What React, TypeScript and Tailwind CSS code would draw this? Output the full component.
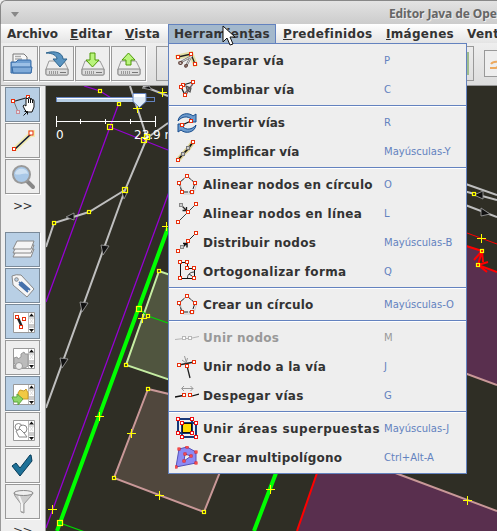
import type { ReactNode } from "react";

const FONT = "font-['DejaVu_Sans',sans-serif]";

type Pt = [number, number];

function Node({ at, c = "#e8300c", f = "#fff", s = 3, w = 1 }: { at: Pt; c?: string; f?: string; s?: number; w?: number }) {
  return <rect x={Math.floor(at[0]) - s / 2} y={Math.floor(at[1]) - s / 2} width={s} height={s} fill={f} stroke={c} strokeWidth={w} />;
}

function Nodes({ pts, c, s }: { pts: Pt[]; c?: string; s?: number }) {
  return <>{pts.map((p, i) => <Node key={i} at={p} c={c} s={s} />)}</>;
}

function MenuSvg({ children }: { children: ReactNode }) {
  return <svg width="24" height="24" viewBox="0 0 24 24" fill="none" className="mt-px shrink-0">{children}</svg>;
}

function Pentagon() {
  return (
    <MenuSvg>
      <path d="M13.500 4.500l8 7-3 9.500h-10l-3-9" stroke="#ccc" />
      <path d="M12 3l8 7-3 9H7l-3-9z" stroke="#222" strokeDasharray="5 1" />
      <Nodes pts={[[12, 3], [20, 10], [17, 19], [7, 19], [4, 10]]} />
    </MenuSvg>
  );
}

const icons: Record<string, ReactNode> = {
  split: (
    <MenuSvg>
      <path d="M3 8l13-3M16 5l4 10" stroke="#e3dfa2" strokeWidth="5" strokeLinecap="square" />
      <path d="M3 8l13-3 4 10" stroke="#222" strokeWidth="1.3" />
      <path d="M6 13l11-6M17 6l-6 11" stroke="#777" strokeWidth="2.2" />
      <path d="M6 13l11-6M17 6l-6 11" stroke="#eee" strokeWidth=".8" />
      <path d="M4 13c2-1 4 0 3 1.500s-4 1-3-1.500zM10 16c2-1 3 0 2 1.500s-3 0-2-1.500z" stroke="#5e3e36" strokeWidth="1.3" />
      <Nodes pts={[[3, 8], [16, 5], [20, 15]]} />
    </MenuSvg>
  ),
  combine: (
    <MenuSvg>
      <path d="M8 7l10-3M6 9l4 8" stroke="#222" strokeWidth="1.3" />
      <path d="M11 17l7-12M10 15l8-9" stroke="#765c62" strokeWidth="1.2" />
      <path d="M11 8l1 4 3 2 1-4zM12 10h4" stroke="#555" strokeWidth="1.2" />
      <Nodes pts={[[8, 7], [6, 9], [18, 4], [10, 17]]} />
    </MenuSvg>
  ),
  reverse: (
    <MenuSvg>
      <path d="M3 10C4 2 14 1 18 5l3-2v8h-8l3-3c-3-3-9-3-13 2z" fill="#6d9bcd" stroke="#174c8d" />
      <path d="M21 14c-1 8-11 9-15 5l-3 2v-8h8l-3 3c3 3 9 3 13-2z" fill="#6d9bcd" stroke="#174c8d" />
      <path d="M7 14l9-4" stroke="#eee" strokeWidth="3" />
      <path d="M7 14l9-4" stroke="#111" strokeWidth="1.3" />
      <Nodes pts={[[7, 14], [16, 10]]} />
    </MenuSvg>
  ),
  simplify: (
    <MenuSvg>
      <path d="M3 20l5-6 5-5 5-7" stroke="#ddd091" strokeWidth="4.500" />
      <path d="M3 20l5-6 5-5 5-7" stroke="#111" strokeWidth="1.700" />
      <Node at={[8, 14]} c="#777" f="#ccc" /><Node at={[13, 8]} c="#777" f="#ccc" />
      <Nodes pts={[[3, 20], [18, 2]]} />
    </MenuSvg>
  ),
  circle: <Pentagon />,
  create: <Pentagon />,
  line: (
    <MenuSvg>
      <path d="M3 20L21 2" stroke="#444" /><path d="M6 3l5 5M7.500 8.500h4V5" stroke="#222" strokeWidth="1.3" />
      <Node at={[6, 3]} c="#888" f="#ccc" /><Nodes pts={[[3, 20], [13, 10], [21, 2]]} />
    </MenuSvg>
  ),
  distribute: (
    <MenuSvg>
      <path d="M3 20L21 2" stroke="#222" /><path d="M8 16l4-4M8 12.500h4v4" stroke="#111" strokeWidth="1.4" />
      <Node at={[7, 16]} c="#888" f="#ccc" /><Nodes pts={[[3, 20], [13, 10], [21, 2]]} />
    </MenuSvg>
  ),
  ortho: (
    <MenuSvg>
      <path d="M5.500 2.500h7v6h7v10h-14z" stroke="#111" /><path d="M12.500 18c0-4 3-6 7-6M14 14l3 2" stroke="#333" />
      <Nodes pts={[[5, 2], [12, 2], [12, 8], [19, 8], [19, 18], [5, 18]]} />
    </MenuSvg>
  ),
  merge: (
    <MenuSvg>
      <path d="M0 13.500l9-1h6l9-2" stroke="#b5b5b5" strokeWidth="1.2" /><Nodes c="#b8b8b8" pts={[[9, 12], [15, 12]]} />
    </MenuSvg>
  ),
  join: (
    <MenuSvg>
      <path d="M4 10l15-3M12 11l3 12" stroke="#222" strokeWidth="1.3" />
      <path d="M9.500 1l2 7M7 5l4 3 1.500-5" stroke="#999" />
      <Nodes pts={[[4, 10], [12, 11], [19, 7]]} />
    </MenuSvg>
  ),
  unglue: (
    <MenuSvg>
      <path d="M7 4.500h11M9 2L6.500 4.500 9 7M15.500 2L18 4.500 15.500 7" stroke="#999" />
      <path d="M0 13l8-1.500M17 12l7-2" stroke="#111" strokeWidth="1.3" />
      <Nodes pts={[[9, 11], [15, 11]]} />
    </MenuSvg>
  ),
  areas: (
    <MenuSvg>
      <path d="M7 6h10v10H7z" fill="#ffd900" />
      <path d="M3 2h14v14H3zM7 6h14v14H7z" stroke="#173878" strokeWidth="2" />
      <path d="M7.500 6.500h9v9h-9z" stroke="#111" />
      <Nodes c="#ed1010" pts={[[3, 2], [17, 2], [3, 16], [7, 6], [21, 6], [17, 16], [7, 20], [21, 20]]} />
    </MenuSvg>
  ),
  multi: (
    <MenuSvg>
      <path d="M4 3l8-2 9 5v11L1 21z" fill="#8b8bf5" stroke="#5454bb" />
      <path d="M10 8l6 2-7 5z" fill="#eee" stroke="#5454bb" />
      <Nodes c="#ed1010" s={2} pts={[[4, 3], [12, 1], [21, 6], [21, 17], [1, 21], [10, 8], [16, 10], [9, 15]]} />
    </MenuSvg>
  ),
};

type Item = { icon: string; label: string; keys: string; track: string; off?: boolean };
const groups: Item[][] = [
  [
    { icon: "split", label: "Separar vía", keys: "P", track: "tracking-[0.32px]" },
    { icon: "combine", label: "Combinar vía", keys: "C", track: "tracking-[0.2px]" },
  ],
  [
    { icon: "reverse", label: "Invertir vías", keys: "R", track: "tracking-normal" },
    { icon: "simplify", label: "Simplificar vía", keys: "Mayúsculas-Y", track: "tracking-normal" },
  ],
  [
    { icon: "circle", label: "Alinear nodos en círculo", keys: "O", track: "tracking-[0.27px]" },
    { icon: "line", label: "Alinear nodos en línea", keys: "L", track: "tracking-[0.37px]" },
    { icon: "distribute", label: "Distribuir nodos", keys: "Mayúsculas-B", track: "tracking-[0.25px]" },
    { icon: "ortho", label: "Ortogonalizar forma", keys: "Q", track: "tracking-[0.34px]" },
  ],
  [{ icon: "create", label: "Crear un círculo", keys: "Mayúsculas-O", track: "tracking-[0.19px]" }],
  [
    { icon: "merge", label: "Unir nodos", keys: "M", off: true, track: "tracking-[0.3px]" },
    { icon: "join", label: "Unir nodo a la vía", keys: "J", track: "tracking-[0.22px]" },
    { icon: "unglue", label: "Despegar vías", keys: "G", track: "tracking-[0.38px]" },
  ],
  [
    { icon: "areas", label: "Unir áreas superpuestas", keys: "Mayúsculas-J", track: "tracking-[0.49px]" },
    { icon: "multi", label: "Crear multipolígono", keys: "Ctrl+Alt-A", track: "tracking-[0.24px]" },
  ],
];

function Menu() {
  return (
    <div className="absolute left-[168px] top-[43px] h-[431px] w-[299px] border border-[#6382bf] bg-[#eee] pt-[2px]">
      {groups.map((g, gi) => (
        <div key={gi}>
          {gi > 0 && <div className="h-1 pt-px"><div className="h-[2px] border-b border-white bg-[#6382bf]" /></div>}
          {g.map((it) => (
            <div key={it.label} className="flex h-[29px] items-center pl-[6px]">
              {icons[it.icon]}
              <span className={`ml-1 w-[181px] shrink-0 whitespace-nowrap text-[12px] font-bold leading-4 ${it.track} ${it.off ? "text-[#999]" : "text-[#333]"}`}>{it.label}</span>
              <span className={`whitespace-nowrap text-[10px] leading-3 ${it.off ? "text-[#999]" : "text-[#6382bf]"}`}>{it.keys}</span>
            </div>
          ))}
        </div>
      ))}
    </div>
  );
}

function Plus({ at }: { at: Pt }) {
  return <path d={`M${at[0] - 4} ${at[1] + 0.5}h9M${at[0] + 0.5} ${at[1] - 4}v9`} stroke="#ff0" shapeRendering="crispEdges" />;
}

function MapView() {
  const small: Pt[] = [[99, 90], [118, 103], [88, 211], [53, 222], [158, 270], [147, 315], [125, 364], [147, 388], [113, 477], [203, 511], [473, 193]];
  const large: Pt[] = [[109, 126], [143, 139], [146, 136], [124, 189], [138, 308], [59, 522]];
  const pluses: Pt[] = [[162, 92], [137, 108], [142, 318], [99, 416], [52, 509], [131, 433], [159, 495], [270, 489], [467, 500], [481, 238], [166, 226]];
  return (
    <svg width="451" height="445" viewBox="46 86 451 445" fill="none" className="block shrink-0 bg-[#2f2e25]">
      <path d="M159 271l-33 94 200 68V330z" fill="#50553f" stroke="#c5eda2" strokeWidth="2" />
      <path d="M148 389l-34 89 90 34 40-100z" fill="#50473d" stroke="#c99898" strokeWidth="2" />
      <path d="M317 473h78l102 38v20H297z" fill="#592f4e" />
      <path d="M440 237l42 14-4 14 19 7v113l-57-20z" fill="#592f4e" />
      <path d="M440 364l57 21M390 471l107 40" stroke="#c99898" strokeWidth="2" />
      <path d="M84 86l16 5 19 12-9 24-64 175M110 127l58 23M180 162L46 528" stroke="#9500d2" strokeWidth="1.3" />
      <g stroke="#bfbfbf" strokeWidth="2">
        <path d="M130 86l17 52-22 52-79 218M125 190l-36 22-35 11-8 24M147 138l21-15M143 86l25 10" />
        <path d="M460 182l37 13M460 190l37 10M460 203l37 14" />
      </g>
      <path d="M168 228L57 531M276 473l-22 58" stroke="#0f0" strokeWidth="4" />
      <path d="M139 309l9 7 20 7M60 523l25 9" stroke="#00d700" strokeWidth="1.2" />
      <path d="M317 473l-20 58" stroke="#f00" strokeWidth="2" />
      <path d="M467 233l30 11" stroke="#f00" />
      <path d="M460 244l22 7-4 14 19 7M474 260l8-9 1 11M488 262l-10 3 9 7" stroke="#f00" strokeWidth="2" />
      <g fill="#111" stroke="#999" strokeWidth=".9">
        <path d="M101 245l8 1-6 9zM80 302l8 1-6 9zM60 358l8 1-6 9zM66 217l8-4v7zM122 192l5 1-3 6zM142 88l7-2 3 4zM474 195l9-4v8zM481 208l9 6-9 2z" />
      </g>
      {small.map((p, i) => <Node key={i} at={[p[0] + 1, p[1] + 1]} c="#ff0" f="#2f2e25" s={3} w={1.2} />)}
      {large.map((p, i) => <Node key={i} at={[p[0] + 1, p[1] + 1]} c="#ff0" f="none" s={5} w={1.2} />)}
      {pluses.map((p, i) => <Plus key={i} at={p} />)}
      <Node at={[482, 251]} c="#ff0" f="#f00" w={1.2} /><Node at={[478, 265]} c="#ff0" f="#f00" w={1.2} />
      <path d="M56 121.500h100M56.500 116v11M80.500 119v5M105.500 119v5M130.500 119v5M155.500 116v11" stroke="#fff" shapeRendering="crispEdges" />
      <text x="56" y="139" fill="#fff" className={`${FONT} text-[12px]`}>0</text>
      <text x="134" y="139" fill="#fff" className={`${FONT} text-[12px]`}>23.9 m</text>
      <rect x="56.500" y="97.500" width="98" height="4" stroke="#6382bf" />
      <path d="M57 99h76v3H57z" fill="#b8cfe5" /><path d="M57 98.500h76" stroke="#fff" />
      <path d="M133 93.500h13v8l-6.500 6-6.500-6z" fill="#dfeaf5" stroke="#6382bf" /><path d="M134 94h11v3h-11z" fill="#fff" />
    </svg>
  );
}

function Button({ on, children }: { on?: boolean; children?: ReactNode }) {
  return (
    <div className={`flex h-[35px] w-[35px] shrink-0 items-center justify-center border shadow-[1px_1px_0_#fff] ${on ? "border-[#7a8a99] bg-[#b8cfe5]" : "border-[#999] bg-[#eee]"}`}>
      <svg width="24" height="24" viewBox="0 0 24 24" fill="none" className="overflow-visible">{children}</svg>
    </div>
  );
}

const disk = (
  <>
    <path d="M4 9h15l4 8v5q0 1-1 1H2q-1 0-1-1v-5z" fill="#eee" stroke="#999" />
    <path d="M1 17h22v5q0 1-1 1H2q-1 0-1-1z" fill="#ddd" stroke="#888" />
    <path d="M4.500 19v3m2-3v3m2-3v3m2-3v3m2-3v3" stroke="#999" /><path d="M15 20.500h6" stroke="#777" />
  </>
);
const list = (c: ReactNode) => (
  <>
    <path d="M2.500 2.500h21v20h-21z" fill="#fff" stroke="#999" /><path d="M17.500 3v19M18 8h5" stroke="#bbb" />
    <path d="M19 9l3 4m0-4l-3 4" stroke="#ddd" />
    <path d="M18 14h5v4h-5z" fill="#ccc" /><path d="M18 6.500L20.500 3.500 23 6.500zM18 19L20.500 22 23 19z" fill="#111" />{c}
  </>
);

export default function App() {
  return (
    <div className={`relative h-[531px] w-[497px] overflow-hidden bg-[#eee] text-[#333] ${FONT}`}>
      <header className="flex h-6 items-center overflow-hidden rounded-tl-md border-l border-t border-[#888] bg-gradient-to-b from-[#e3e3e3] to-[#ccc]">
        <svg width="8" height="5" viewBox="0 0 8 5" className="ml-[10px] mt-[3px] shrink-0"><path d="M0 0h8L4 5z" fill="#888" /></svg>
        <span className="ml-[370px] mt-[3px] whitespace-nowrap font-['Noto_Sans',sans-serif] text-[12px] font-bold tracking-[-0.1px] text-[#666] [text-shadow:1px_1px_0_#eee]">Editor Java de OpenStreetMap</span>
      </header>
      <nav className="flex h-[19px] items-center whitespace-nowrap border-l border-[#999] bg-gradient-to-b from-white to-[#e4e4e4] text-[12px] font-bold">
        <span className="ml-[6px] w-[63px] shrink-0">Archivo</span>
        <span className="w-[55px] shrink-0 tracking-[0.23px]"><u>E</u>ditar</span>
        <span className="w-[43px] shrink-0 tracking-[0.2px]"><u>V</u>ista</span>
        <span className="flex h-[19px] w-[108px] shrink-0 items-center border-l border-r border-t border-[#6382bf] bg-[#a3b8cc] pl-[5px] tracking-[0.3px]">Herramien<u>t</u>as</span>
        <span className="ml-[7px] w-[103px] shrink-0 tracking-[0.33px]"><u>P</u>redefinidos</span>
        <span className="w-[81px] shrink-0 tracking-[0.3px]"><u>I</u>mágenes</span>
        <span className="tracking-[0.3px]">Ventanas</span>
      </nav>
      <div className="flex h-[43px] items-start gap-px overflow-hidden border-b border-l border-[#999] bg-gradient-to-b from-[#eee] to-[#ddd] pl-[2px] pt-[3px]">
        <Button>
          <path d="M4 16V2h11l3 3v10z" fill="#f8f8f8" stroke="#777" /><path d="M6 4.500h6M6 7h7" stroke="#aaa" strokeWidth="1.500" />
          <path d="M2 21V10h5l2-2h12q1 0 1 1v12z" fill="#6f9fd2" stroke="#3469a4" /><path d="M3 11h18v5H3z" fill="#9cc0e6" /><path d="M4 21l-1-6h20l-1 6z" fill="#80abd9" stroke="#3469a4" />
        </Button>
        <Button>{disk}<path d="M1 1C10-2 18 1 18 7h4l-7 8-7-8h4c0-3-4-6-11-6z" fill="#5a94c1" stroke="#2f658e" /></Button>
        <Button>{disk}<path d="M9 1h5v7h4l-6.500 7L5 8h4z" fill="#b9f47c" stroke="#4e9a06" /></Button>
        <Button>{disk}<path d="M9 13h5V8h4l-6.500-7L5 8h4z" fill="#b9f47c" stroke="#4e9a06" /></Button>
        <div className="ml-[9px] flex h-[35px] w-[318px] shrink-0 justify-end border border-[#999]"><div className="my-[5px] mr-1 w-1 bg-[#9dbb8d]" /></div>
        <div className="ml-[9px] mt-1 flex h-[27px] w-[30px] shrink-0 items-center border border-[#999] bg-[#eee]">
          <svg width="20" height="20" viewBox="0 0 20 20" fill="none" className="ml-1 shrink-0"><path d="M2 10q2-3 8-2M9 8q2 4-2 6H1" stroke="#eca95e" strokeWidth="2" /></svg>
        </div>
      </div>
      <div className="flex h-[445px]">
        <aside className="flex w-[46px] shrink-0 flex-col gap-px overflow-hidden border-l border-r border-[#999] pl-[4px] pt-px">
          <Button on>
            <path d="M2.500 8.500l14-4" stroke="#222" strokeWidth="1.3" /><path d="M3.500 10l4 10" stroke="#777" />
            <Nodes pts={[[2.5, 8.5], [17.5, 4.5]]} /><Node at={[7.5, 19.5]} c="#cb8c96" f="#dbe2ee" />
            <path d="M14 17l-2-4q1-2 3 0V6q1-2 2 0V5q1-1 2 0v1q1-1 2 0v1q2-1 2 1v6l-2 5h-5z" fill="#fff" stroke="#111" /><path d="M17.500 6v4m2-4v4m2-3v3" stroke="#111" />
            <path d="M12.500 22.500l4-4m-3 0h3v3" stroke="#111" />
          </Button>
          <Button><path d="M3.500 20.500l17-16" stroke="#f0eab0" strokeWidth="5" /><path d="M17 1h7v7h-7z" fill="#f0eab0" /><path d="M3.500 20.500l17-16" stroke="#111b38" strokeWidth="1.700" /><Node at={[3.5, 20.5]} /><Node at={[20.5, 4.5]} s={4} /></Button>
          <Button><path d="M16 16l6 6" stroke="#888" strokeWidth="4" strokeLinecap="round" /><circle cx="10.500" cy="9.500" r="8.500" fill="#a9c8e7" stroke="#999" strokeWidth="2" /><path d="M4 9c1-7 12-7 13 0-3-2-9 2-13 0z" fill="#cfe1f2" /></Button>
          <span className="flex h-[36px] shrink-0 items-start pl-[8px] pt-[5px] text-[12px] leading-3 tracking-[-0.5px]">&gt;&gt;</span>
          <Button on>{[10, 6, 2].map((y) => <path key={y} d={`M6 ${y + 1}h17l-3 8H2z`} fill="#f5f5f5" stroke="#888" />)}</Button>
          <Button on>
            <path d="M1 2q4-2 9-1l13 14-7 8L2 11z" fill="#f6f6f6" stroke="#888" />
            <path d="M10 8l9 8m-11-6l9 8m-9-10l9 8" stroke="#4671ab" strokeWidth="1.800" /><circle cx="5.500" cy="5.500" r="1.800" fill="#b8cfe5" stroke="#888" />
          </Button>
          <Button on>{list(<><path d="M7 8l4 9" stroke="#222" strokeWidth="2.500" /><Nodes pts={[[6.5, 7.5], [10.5, 17.5], [13.5, 9.5]]} /></>)}</Button>
          <Button>{list(<><path d="M3 12l3-1 1 2 3-2V8l3-2 1 2h3v12l-3 2H3v-3h2l-2-2z" fill="#bbb" stroke="#999" /><circle cx="8" cy="20" r="3.500" fill="#eee" stroke="#999" /></>)}</Button>
          <Button on>{list(<><path d="M8 15l-1-4 2-3 4 1 2-2 2 4v6H8z" fill="#f1c943" stroke="#c89a28" /><path d="M1 15h5v-3l6 5-5 6v-3H3z" fill="#8ed66a" stroke="#5fa83e" /></>)}</Button>
          <Button>{list(<g fill="#fff" stroke="#888"><circle cx="7.500" cy="9" r="3.500" /><circle cx="12" cy="11" r="4" /><path d="M5 13l4-2 4 4 3 4H8z" /></g>)}</Button>
          <Button><path d="M1 12l4-3 4 5L19 1h1l1 6L9 22z" fill="#1e7198" stroke="#073c59" /></Button>
          <Button><path d="M3 3l1 3 6 8v8l3 1v-9l7-8 2-3z" fill="#ccc" stroke="#999" /><path d="M8 6l3 8v7" stroke="#f4f4f4" strokeWidth="2" /><ellipse cx="12.500" cy="3" rx="9.500" ry="2.500" fill="#eee" stroke="#888" /></Button>
          <span className="flex h-[36px] shrink-0 items-start pl-[8px] pt-[5px] text-[12px] leading-3 tracking-[-0.5px]">&gt;&gt;</span>
        </aside>
        <MapView />
      </div>
      <Menu />
      <svg width="14" height="22" viewBox="0 0 14 22" className="absolute left-[222px] top-[25px]"><path d="M1 1v16l4-4 3 7 3-1-3-7h5z" fill="#fff" stroke="#111" /></svg>
    </div>
  );
}
